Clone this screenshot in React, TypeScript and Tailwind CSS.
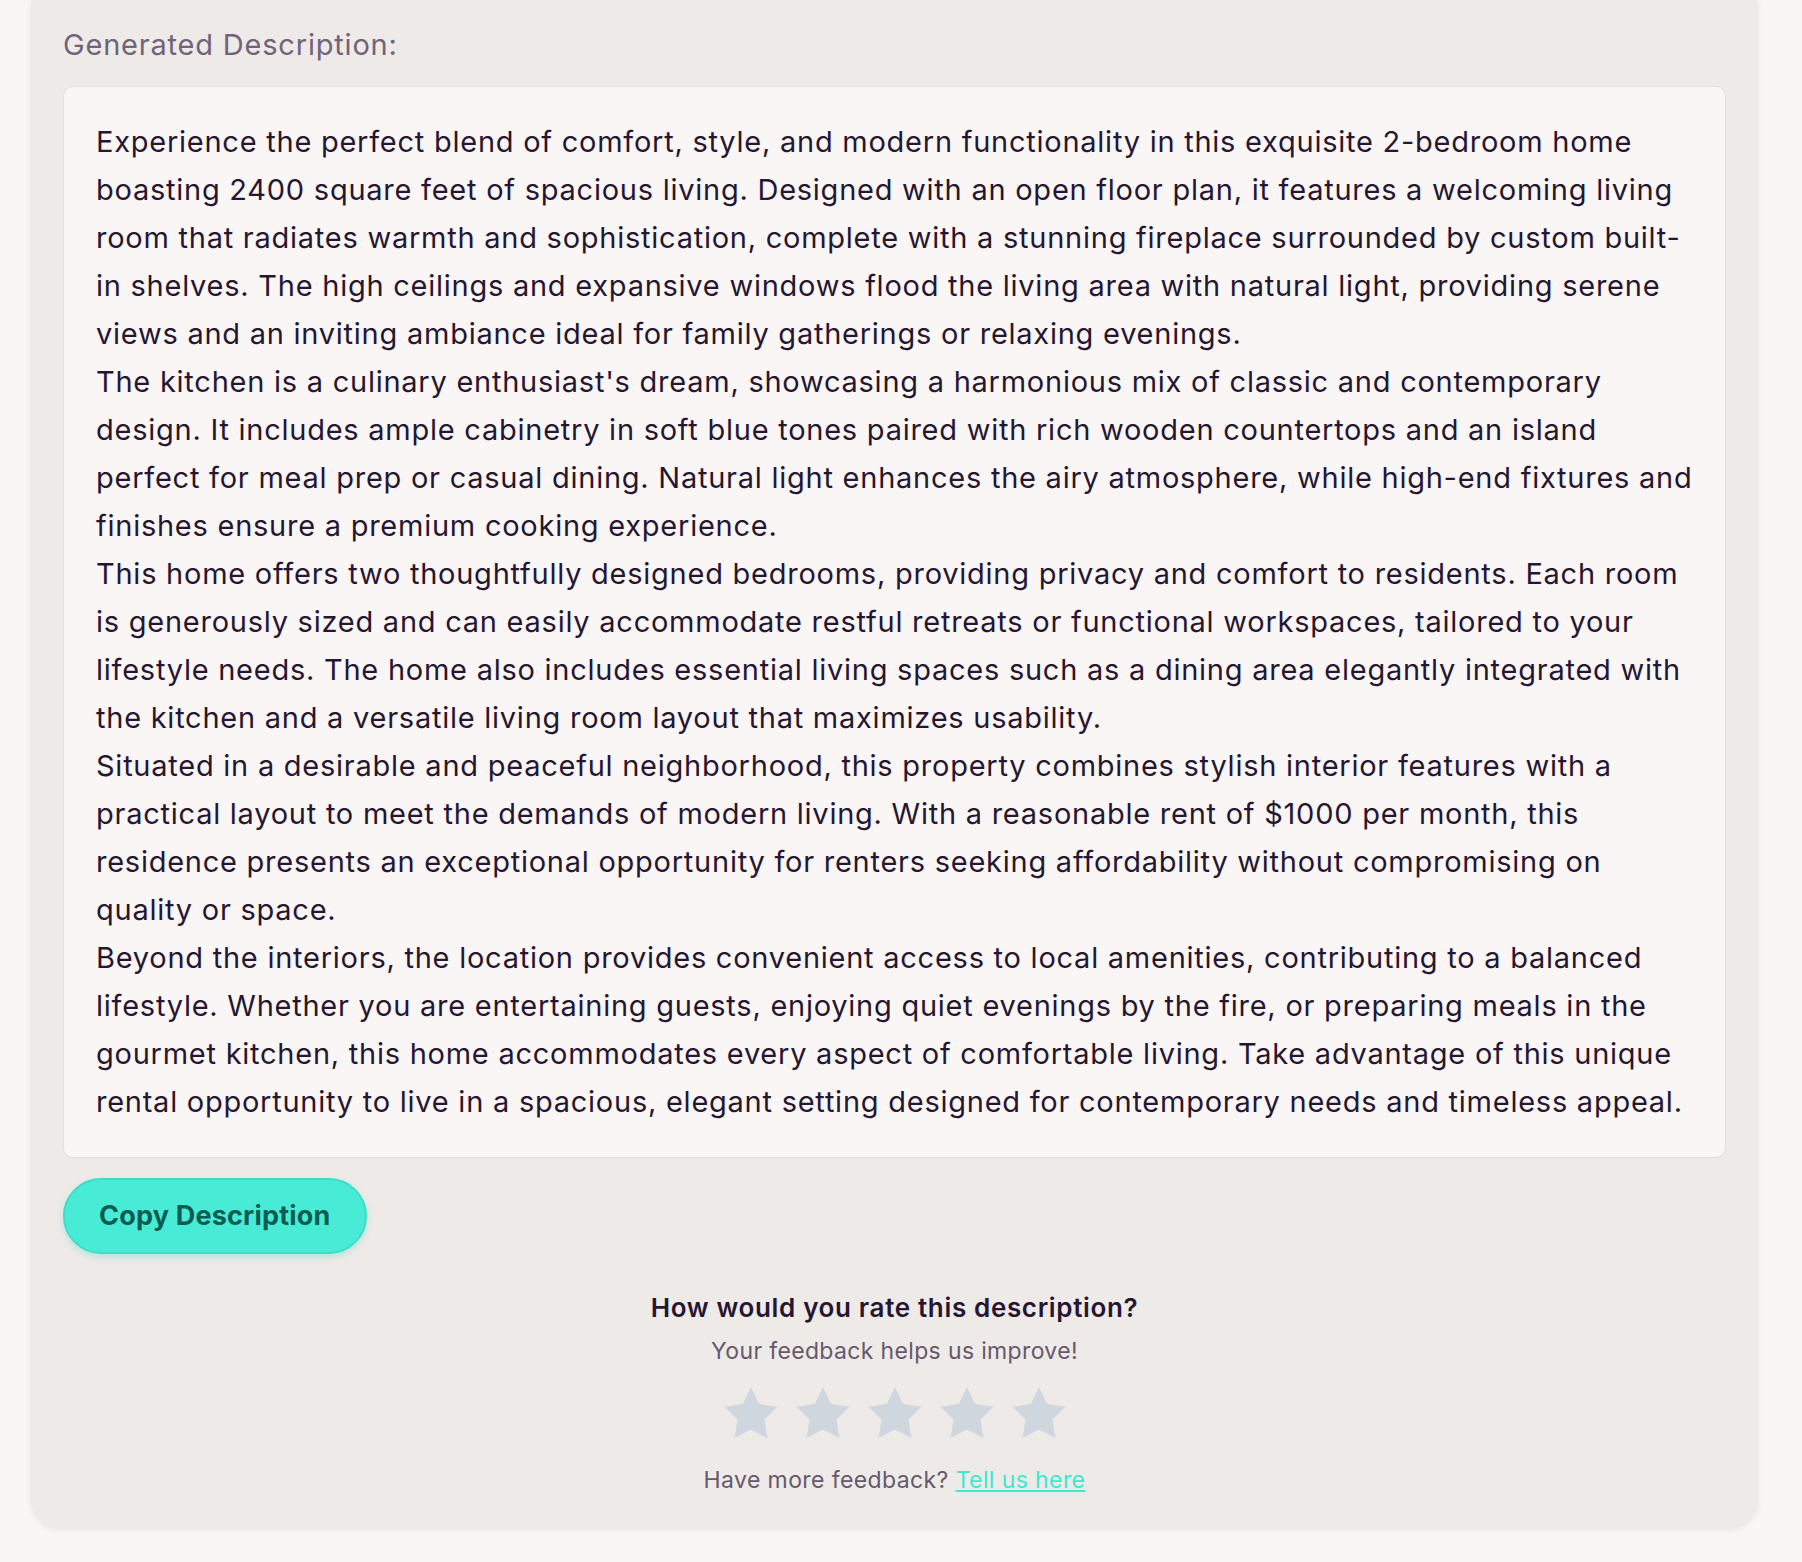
// each paragraph is kept as the lines shown in the layout
const paragraphs = [
  [
    "Experience the perfect blend of comfort, style, and modern functionality in this exquisite 2-bedroom home",
    "boasting 2400 square feet of spacious living. Designed with an open floor plan, it features a welcoming living",
    "room that radiates warmth and sophistication, complete with a stunning fireplace surrounded by custom built-",
    "in shelves. The high ceilings and expansive windows flood the living area with natural light, providing serene",
    "views and an inviting ambiance ideal for family gatherings or relaxing evenings.",
  ],
  [
    "The kitchen is a culinary enthusiast's dream, showcasing a harmonious mix of classic and contemporary",
    "design. It includes ample cabinetry in soft blue tones paired with rich wooden countertops and an island",
    "perfect for meal prep or casual dining. Natural light enhances the airy atmosphere, while high-end fixtures and",
    "finishes ensure a premium cooking experience.",
  ],
  [
    "This home offers two thoughtfully designed bedrooms, providing privacy and comfort to residents. Each room",
    "is generously sized and can easily accommodate restful retreats or functional workspaces, tailored to your",
    "lifestyle needs. The home also includes essential living spaces such as a dining area elegantly integrated with",
    "the kitchen and a versatile living room layout that maximizes usability.",
  ],
  [
    "Situated in a desirable and peaceful neighborhood, this property combines stylish interior features with a",
    "practical layout to meet the demands of modern living. With a reasonable rent of $1000 per month, this",
    "residence presents an exceptional opportunity for renters seeking affordability without compromising on",
    "quality or space.",
  ],
  [
    "Beyond the interiors, the location provides convenient access to local amenities, contributing to a balanced",
    "lifestyle. Whether you are entertaining guests, enjoying quiet evenings by the fire, or preparing meals in the",
    "gourmet kitchen, this home accommodates every aspect of comfortable living. Take advantage of this unique",
    "rental opportunity to live in a spacious, elegant setting designed for contemporary needs and timeless appeal.",
  ],
];

function Star() {
  return (
    <svg viewBox="0 0 24 24" className="w-16 h-16" fill="#d0d6de">
      <polygon points="12,2 15.09,8.26 22,9.27 17,14.14 18.18,21.02 12,17.77 5.82,21.02 7,14.14 2,9.27 8.91,8.26" />
    </svg>
  );
}

export default function App() {
  return (
    <div className="min-h-screen bg-[#f9f6f5] font-['Inter','Noto_Sans',sans-serif]">
      <div className="mx-[31px] w-[1727px] bg-[#eeeae8] rounded-b-[30px] shadow-[0_2px_6px_rgba(0,0,0,0.08)] px-[32px] pt-[27px] pb-[33px]">
        {/* Heading */}
        <h2 className="text-[29px] leading-[36px] tracking-[0.8px] text-[#71637a] mb-[23px]">Generated Description:</h2>

        {/* Description box */}
        <div className="bg-[#f9f6f5] border border-[#e4dedc] rounded-[10px] px-[32px] py-[31px]">
          <div className="text-[29px] leading-[48px] tracking-[0.75px] text-[#261631]">
            {paragraphs.map((lines, i) => (
              <p key={i}>
                {lines.map((l, j) => (
                  <span key={j} className="block whitespace-nowrap">{l}</span>
                ))}
              </p>
            ))}
          </div>
        </div>

        {/* Copy button */}
        <button className="mt-[20px] h-[76px] px-[34px] rounded-full bg-[#48ecd6] border-2 border-[#3fdcc6] text-[#0d5c52] text-[27px] tracking-[0.2px] font-bold shadow-[0_3px_6px_rgba(64,220,198,0.35)]">
          Copy Description
        </button>

        {/* Rating */}
        <div className="mt-[36px] flex flex-col items-center">
          <h3 className="text-[26px] leading-[36px] tracking-[0.65px] font-semibold text-[#261631]">How would you rate this description?</h3>
          <p className="mt-[10px] text-[23px] leading-[30px] tracking-[0.35px] text-[#66586d]">Your feedback helps us improve!</p>
          <div className="mt-[16px] flex gap-2">
            {[0, 1, 2, 3, 4].map((i) => (
              <Star key={i} />
            ))}
          </div>
          <p className="mt-[19px] text-[23px] leading-[30px] tracking-[0.4px] text-[#66586d]">
            Have more feedback?{' '}
            <a href="#" className="text-[#3ee8d1] underline">Tell us here</a>
          </p>
        </div>
      </div>
    </div>
  );
}
